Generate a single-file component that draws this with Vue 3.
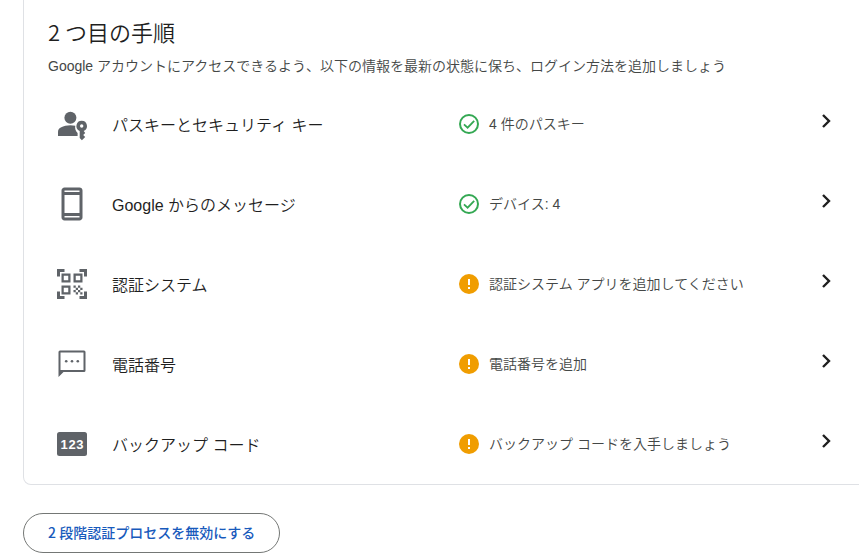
<script setup>
const methods = [
  { id: 'passkey', label: 'パスキーとセキュリティ キー', status: '4 件のパスキー', ok: true },
  { id: 'prompt', label: 'Google からのメッセージ', status: 'デバイス: 4', ok: true },
  { id: 'authenticator', label: '認証システム', status: '認証システム アプリを追加してください', ok: false },
  { id: 'phone', label: '電話番号', status: '電話番号を追加', ok: false },
  { id: 'backup', label: 'バックアップ コード', status: 'バックアップ コードを入手しましょう', ok: false },
]
</script>

<template>
  <main class="page">
    <section class="card">
      <header class="head">
        <h2 class="title">2 つ目の手順</h2>
        <p class="subtitle">Google アカウントにアクセスできるよう、以下の情報を最新の状態に保ち、ログイン方法を追加しましょう</p>
      </header>
      <ul class="list">
        <li v-for="m in methods" :key="m.id">
          <a class="row" href="#">
            <svg v-if="m.id === 'passkey'" class="icon" viewBox="0 0 36 36" aria-hidden="true">
              <circle cx="16.4" cy="11.7" r="6" />
              <path d="M4 30v-4.1c0-2 1-3.500 2.800-4.400 3-1.500 6.200-2.300 9.600-2.300 1.700 0 3.300.2 4.900.6-.6 2.900.4 5.500 2.300 7.200V30z" />
              <path fill-rule="evenodd" d="M27.700 14.800a5.300 5.300 0 0 0-2 10.200v7l2.200 2.200 3.300-3.300-2-2 2-2-1.500-1.900a5.300 5.300 0 0 0-2-10.200zm0 3.500a1.700 1.700 0 1 1 0 3.400 1.700 1.700 0 0 1 0-3.400z" />
            </svg>
            <svg v-else-if="m.id === 'prompt'" class="icon" viewBox="0 0 24 24" aria-hidden="true">
              <path d="M17 1.010L7 1c-1.100 0-1.990.9-1.990 2v18c0 1.100.89 2 1.990 2h10c1.100 0 2-.9 2-2V3c0-1.100-.9-1.990-2-1.990zM17 21H7v-1h10v1zm0-3H7V6h10v12zm0-14H7V3h10v1z" />
            </svg>
            <svg v-else-if="m.id === 'authenticator'" class="icon" viewBox="0 0 24 24" aria-hidden="true">
              <path d="M9.500 6.500v3h-3v-3h3M11 5H5v6h6V5zm-1.500 9.500v3h-3v-3h3M11 13H5v6h6v-6zm6.500-6.500v3h-3v-3h3M19 5h-6v6h6V5zm-6 8h1.500v1.500H13V13zm1.500 1.500H16V16h-1.500v-1.500zM16 13h1.500v1.500H16V13zm-3 3h1.500v1.500H13V16zm1.500 1.500H16V19h-1.500v-1.500zM16 16h1.500v1.500H16V16zm1.500-1.500H19V16h-1.500v-1.500zm0 3H19V19h-1.500v-1.500zM22 7h-2V4h-3V2h5v5zm0 15v-5h-2v3h-3v2h5zM2 22h5v-2H4v-3H2v5zM2 2v5h2V4h3V2H2z" />
            </svg>
            <svg v-else-if="m.id === 'phone'" class="icon" viewBox="0 0 36 36" aria-hidden="true">
              <path fill-rule="evenodd" d="M6 4.500h24a1.500 1.500 0 0 1 1.500 1.500v18.500A1.500 1.500 0 0 1 30 26H9.500l-5 5V6A1.500 1.500 0 0 1 6 4.500zm.5 2v17.500h23V6.500z" />
              <circle cx="12.200" cy="15.200" r="1.300" />
              <circle cx="18" cy="15.200" r="1.300" />
              <circle cx="23.800" cy="15.200" r="1.300" />
            </svg>
            <svg v-else class="icon" viewBox="0 0 36 36" aria-hidden="true">
              <rect x="3" y="6" width="30" height="24" rx="2.500" />
              <text class="digits" x="6.500 14.400 22.300" y="22.600">123</text>
            </svg>

            <span class="label">{{ m.label }}</span>

            <span class="status">
              <svg v-if="m.ok" class="badge" viewBox="0 0 20 20" aria-hidden="true">
                <circle cx="10" cy="10" r="9" fill="none" stroke="#34a853" stroke-width="2" />
                <path d="M5 10.300l3.600 3.400 6.600-6.800" fill="none" stroke="#34a853" stroke-width="1.800" />
              </svg>
              <svg v-else class="badge" viewBox="0 0 20 20" aria-hidden="true">
                <circle cx="10" cy="10" r="10" fill="#f09d00" />
                <path d="M9 5h2v6H9zM9 13h2v2H9z" fill="#fff" />
              </svg>
              <span>{{ m.status }}</span>
            </span>

            <svg class="chevron" viewBox="0 0 24 24" aria-hidden="true">
              <path d="M9 6l6 6-6 6" />
            </svg>
          </a>
        </li>
      </ul>
    </section>

    <button type="button" class="disable">2 段階認証プロセスを無効にする</button>
  </main>
</template>

<style>
body {
  background: #fff;
  overflow: hidden;
}
</style>

<style scoped>
.page {
  font-family: "Liberation Sans", "Noto Sans CJK JP", sans-serif;
  font-weight: 350;
  color: #1f1f1f;
  padding-left: 23px;
}

.card {
  margin-right: -7px;
  border: 1px solid #dfe1e5;
  border-top: 0;
  border-radius: 0 0 8px 8px;
}

.head {
  padding: 18px 24px 8px;
}

.title {
  margin: 0;
  font-family: "Noto Sans CJK JP", sans-serif;
  font-size: 22px;
  line-height: 26px;
  font-weight: 350;
}

.subtitle {
  margin: 12px 0 0;
  font-size: 14px;
  line-height: 20px;
  color: #444746;
}

.list {
  list-style: none;
  margin: 0;
  padding: 0;
}

.row {
  display: grid;
  grid-template-columns: 36px 26fr 25fr 24px;
  align-items: center;
  height: 80px;
  padding: 0 27px 0 30px;
  color: inherit;
  text-decoration: none;
}

.icon {
  width: 36px;
  height: 36px;
  fill: #5f6368;
}

.digits {
  fill: #fff;
  font: 700 13px "Liberation Sans", sans-serif;
}

.label {
  padding: 4px 0 0 22px;
  font-size: 16px;
  line-height: 24px;
}

.status {
  display: flex;
  align-items: center;
  gap: 10px;
  font-size: 14px;
  line-height: 20px;
  color: #444746;
}

.badge {
  flex: none;
  width: 20px;
  height: 20px;
}

.chevron {
  width: 24px;
  height: 24px;
  margin-bottom: 6px;
  fill: none;
  stroke: #1f1f1f;
  stroke-width: 2.4;
}

.disable {
  display: block;
  height: 40px;
  margin-top: 28px;
  padding: 0 24px 2px;
  border: 1px solid #747775;
  border-radius: 20px;
  background: #fff;
  color: #185abc;
  font-family: "Noto Sans CJK JP", sans-serif;
  font-size: 14px;
  font-weight: 500;
  line-height: 20px;
}
</style>
